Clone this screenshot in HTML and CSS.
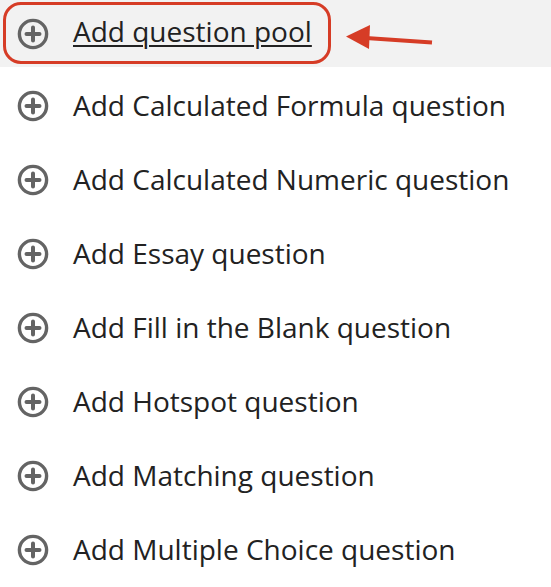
FILE: index.html
```html
<!DOCTYPE html>
<html>
<head>
<meta charset="utf-8">
<link rel="stylesheet" href="styles.css">
</head>
<body>
<ul class="menu">
  <li class="item active">
    <span class="highlight"></span>
    <svg class="icon" viewBox="0 0 32 32"><circle cx="16" cy="16" r="13.6" fill="none" stroke="#646464" stroke-width="3.4"/><path d="M16 9.5v13M9.5 16h13" stroke="#646464" stroke-width="4" stroke-linecap="round"/></svg>
    <a class="label" href="#">Add question pool</a>
    <svg class="arrow" viewBox="0 0 120 40" width="120" height="40"><line x1="20" y1="12" x2="86" y2="16.5" stroke="#d63c26" stroke-width="4"/><polygon points="0,10.5 24,-1 23,23" fill="#d63c26"/></svg>
  </li>
  <li class="item"><svg class="icon" viewBox="0 0 32 32"><circle cx="16" cy="16" r="13.6" fill="none" stroke="#646464" stroke-width="3.4"/><path d="M16 9.5v13M9.5 16h13" stroke="#646464" stroke-width="4" stroke-linecap="round"/></svg><span class="label">Add Calculated Formula question</span></li>
  <li class="item"><svg class="icon" viewBox="0 0 32 32"><circle cx="16" cy="16" r="13.6" fill="none" stroke="#646464" stroke-width="3.4"/><path d="M16 9.5v13M9.5 16h13" stroke="#646464" stroke-width="4" stroke-linecap="round"/></svg><span class="label">Add Calculated Numeric question</span></li>
  <li class="item"><svg class="icon" viewBox="0 0 32 32"><circle cx="16" cy="16" r="13.6" fill="none" stroke="#646464" stroke-width="3.4"/><path d="M16 9.5v13M9.5 16h13" stroke="#646464" stroke-width="4" stroke-linecap="round"/></svg><span class="label">Add Essay question</span></li>
  <li class="item"><svg class="icon" viewBox="0 0 32 32"><circle cx="16" cy="16" r="13.6" fill="none" stroke="#646464" stroke-width="3.4"/><path d="M16 9.5v13M9.5 16h13" stroke="#646464" stroke-width="4" stroke-linecap="round"/></svg><span class="label">Add Fill in the Blank question</span></li>
  <li class="item"><svg class="icon" viewBox="0 0 32 32"><circle cx="16" cy="16" r="13.6" fill="none" stroke="#646464" stroke-width="3.4"/><path d="M16 9.5v13M9.5 16h13" stroke="#646464" stroke-width="4" stroke-linecap="round"/></svg><span class="label">Add Hotspot question</span></li>
  <li class="item"><svg class="icon" viewBox="0 0 32 32"><circle cx="16" cy="16" r="13.6" fill="none" stroke="#646464" stroke-width="3.4"/><path d="M16 9.5v13M9.5 16h13" stroke="#646464" stroke-width="4" stroke-linecap="round"/></svg><span class="label">Add Matching question</span></li>
  <li class="item"><svg class="icon" viewBox="0 0 32 32"><circle cx="16" cy="16" r="13.6" fill="none" stroke="#646464" stroke-width="3.4"/><path d="M16 9.5v13M9.5 16h13" stroke="#646464" stroke-width="4" stroke-linecap="round"/></svg><span class="label">Add Multiple Choice question</span></li>
</ul>
</body>
</html>
```
FILE: styles.css
```css
html, body {
  margin: 0;
  padding: 0;
  background: #ffffff;
  overflow: hidden;
}
body {
  font-family: "Open Sans", "Noto Sans", sans-serif;
  font-size: 28px;
  color: #222222;
}
.menu {
  list-style: none;
  margin: 0;
  padding: 0;
}
.item {
  position: relative;
  display: flex;
  align-items: center;
  height: 74px;
  padding-left: 17px;
}
.item.active {
  height: 67px;
  margin-bottom: 2px;
  background: #f2f2f2;
}
.icon {
  width: 32px;
  height: 32px;
  flex: none;
  margin-right: 24px;
}
.label {
  color: #222222;
  white-space: nowrap;
  text-decoration: none;
  line-height: 38px;
  padding-bottom: 3px;
}
a.label {
  padding-bottom: 5px;
  text-decoration: underline;
  text-decoration-thickness: 1.5px;
  text-underline-offset: 3px;
}
.highlight {
  position: absolute;
  left: 3px;
  top: 2px;
  width: 328px;
  height: 62px;
  box-sizing: border-box;
  border: 3px solid #d63c26;
  border-radius: 18px;
}
.arrow {
  position: absolute;
  left: 346px;
  top: 26px;
  overflow: visible;
}
```
